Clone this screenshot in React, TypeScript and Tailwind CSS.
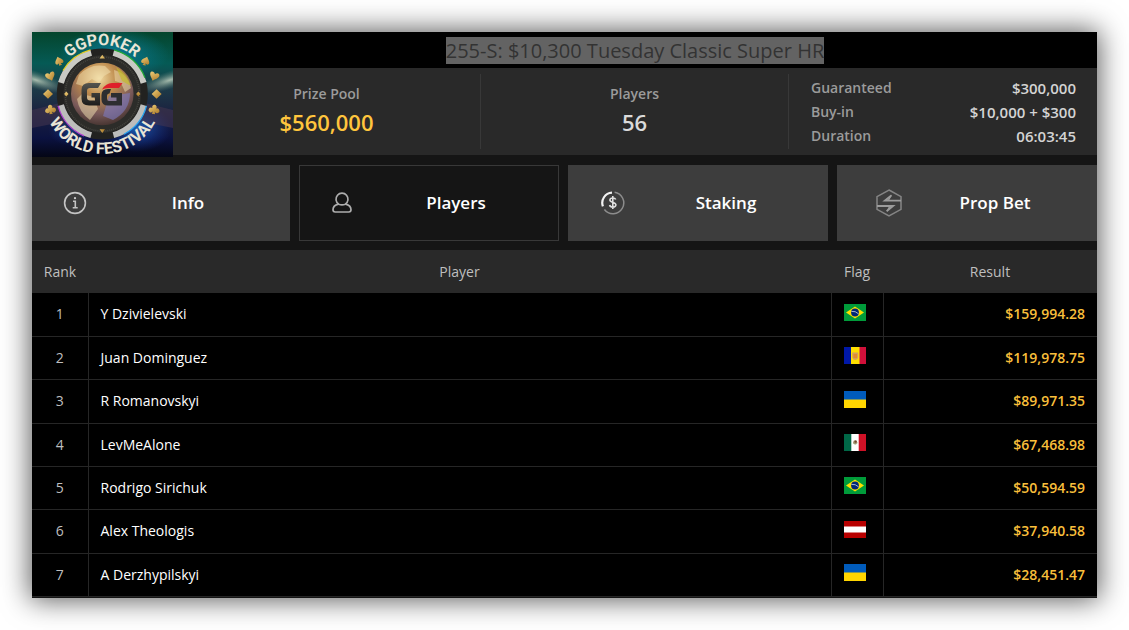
import type { ReactNode } from 'react';
import clsx from 'clsx';

type Country = 'br' | 'ad' | 'ua' | 'mx' | 'at';

interface Result {
  rank: number;
  player: string;
  country: Country;
  prize: string;
}

const results: Result[] = [
  { rank: 1, player: 'Y Dzivielevski', country: 'br', prize: '$159,994.28' },
  { rank: 2, player: 'Juan Dominguez', country: 'ad', prize: '$119,978.75' },
  { rank: 3, player: 'R Romanovskyi', country: 'ua', prize: '$89,971.35' },
  { rank: 4, player: 'LevMeAlone', country: 'mx', prize: '$67,468.98' },
  { rank: 5, player: 'Rodrigo Sirichuk', country: 'br', prize: '$50,594.59' },
  { rank: 6, player: 'Alex Theologis', country: 'at', prize: '$37,940.58' },
  { rank: 7, player: 'A Derzhypilskyi', country: 'ua', prize: '$28,451.47' },
];

const details = [
  { label: 'Guaranteed', value: '$300,000' },
  { label: 'Buy-in', value: '$10,000 + $300' },
  { label: 'Duration', value: '06:03:45' },
];

const countryNames: Record<Country, string> = {
  br: 'Brazil',
  ad: 'Andorra',
  ua: 'Ukraine',
  mx: 'Mexico',
  at: 'Austria',
};

const flagArt: Record<Country, ReactNode> = {
  br: (
    <>
      <rect width="22" height="17" fill="#009b3a" />
      <path d="M11 2.5 20 8.5 11 14.5 2 8.5z" fill="#fedf00" />
      <circle cx="11" cy="8.5" r="3.9" fill="#002776" />
      <path d="M7.4 7.4Q11.4 6.8 14.5 9.8" fill="none" stroke="#cfd8e8" strokeWidth="0.8" />
    </>
  ),
  ad: (
    <>
      <rect width="7" height="17" fill="#0018a8" />
      <rect x="7" width="9" height="17" fill="#fedf00" />
      <rect x="15.5" width="6.5" height="17" fill="#d0103a" />
      <path d="M8.2 5.5h6v5q-.5 2-3 2.5-2.500-.5-3-2.500z" fill="#d3a05a" />
      <rect x="9.5" y="7" width="3.5" height="4" fill="#e58a2c" />
    </>
  ),
  ua: (
    <>
      <rect width="22" height="17" fill="#ffd500" />
      <rect width="22" height="8.5" fill="#005bbb" />
    </>
  ),
  mx: (
    <>
      <rect width="22" height="17" fill="#fff" />
      <rect width="7.3" height="17" fill="#006847" />
      <rect x="14.7" width="7.3" height="17" fill="#ce1126" />
      <circle cx="11.2" cy="8.2" r="2" fill="#a08a6a" />
      <circle cx="11.6" cy="7.6" r="1.1" fill="#6e4a2c" />
      <path d="M9 9.2q2.200 2.400 4.400 0" fill="none" stroke="#9fb88a" strokeWidth="0.7" />
    </>
  ),
  at: (
    <>
      <rect width="22" height="17" fill="#fff" />
      <rect width="22" height="5.5" fill="#b80000" />
      <rect y="11.5" width="22" height="5.5" fill="#b80000" />
    </>
  ),
};

function Flag({ country }: { country: Country }) {
  return (
    <svg viewBox="0 0 22 17" className="block h-[17px] w-[22px]" role="img" aria-label={countryNames[country]}>
      {flagArt[country]}
    </svg>
  );
}

function InfoIcon() {
  return (
    <svg viewBox="0 0 24 24" className="size-6 shrink-0" fill="none" stroke="#c4c4c4" strokeWidth="1.6" aria-hidden="true">
      <circle cx="12" cy="12" r="10.4" />
      <path d="M10 10.3h2.300V16.600M9.700 16.800h5" />
      <circle cx="12" cy="7.2" r="1.1" fill="#d0d0d0" stroke="none" />
    </svg>
  );
}

function PlayerIcon() {
  return (
    <svg viewBox="0 0 24 24" className="size-6 shrink-0" fill="none" stroke="#adadad" strokeWidth="1.7" aria-hidden="true">
      <path d="M8.700 13.200A6 6 0 1 1 15.300 13.200Q12 14.600 8.700 13.200z" />
      <path d="M8.300 13.100C5 13.900 3 16 3 18.800Q3 21 5.200 21H18.800Q21 21 21 18.800C21 16 19 13.900 15.700 13.100" />
    </svg>
  );
}

function StakingIcon() {
  return (
    <svg viewBox="0 0 24 24" className="size-6 shrink-0" fill="none" aria-hidden="true">
      <path d="M13.600 1.200A10.800 10.800 0 1 1 3.400 18.500" stroke="#8c8c8c" strokeWidth="1.5" />
      <path d="M1.900 15.400A10.200 10.200 0 0 1 11 1.700" stroke="#f2f2f2" strokeWidth="2.2" />
      <path
        d="M14.700 8.600C14.300 7.400 13 7 11.800 7 10 7 8.900 7.900 8.900 9.100c0 3.100 6 1.500 6 4.700 0 1.400-1.300 2.300-3.100 2.300-1.600 0-2.900-.7-3.200-2.100M11.800 5v13"
        stroke="#dedede"
        strokeWidth="1.6"
      />
    </svg>
  );
}

function PropBetIcon() {
  return (
    <svg viewBox="0 0 26 28" className="h-7 w-[26px] shrink-0" fill="none" stroke="#9c9c9c" strokeWidth="1.5" aria-hidden="true">
      <path d="M13 1 25 7.600V20.400L13 27 1 20.400V7.600z" stroke="#858585" />
      <path d="M25 11.600H9L15.600 6.300M1 17H17L10.600 22.200" strokeWidth="1.9" />
      <path d="M14.500 7.500 12.500 11M11.800 21 14 17" />
    </svg>
  );
}

const tabs = [
  { name: 'Info', icon: <InfoIcon />, padding: 'pl-[30px]' },
  { name: 'Players', icon: <PlayerIcon />, padding: 'pl-[30px]' },
  { name: 'Staking', icon: <StakingIcon />, padding: 'pl-8' },
  { name: 'Prop Bet', icon: <PropBetIcon />, padding: 'pl-[38px] pr-2' },
];

const suitPaths = {
  spade: 'M0-4.500C1.500-2.500 4.200-1 4.200 1.200 4.200 3 2 3.400.8 2.200L1.600 4.500H-1.600L-.8 2.200C-2 3.400-4.200 3-4.200 1.200-4.200-1-1.500-2.500 0-4.500z',
  heart: 'M0 4.500C-2 2-4.800.2-4.800-2-4.800-4.600-1.400-5 0-2.500 1.400-5 4.800-4.600 4.800-2 4.800.2 2 2 0 4.500z',
  diamond: 'M0-4.800 5 0 0 4.800-5 0z',
  club: 'M0-4.700A2.300 2.300 0 0 1 1.900-1.200 2.400 2.400 0 1 1 .9 2L1.700 4.500H-1.700L-.9 2A2.400 2.400 0 1 1-1.900-1.200 2.300 2.300 0 0 1 0-4.700z',
};

const suits = [
  { d: suitPaths.spade, x: 27, y: 29, turn: -20 },
  { d: suitPaths.heart, x: 18.5, y: 44.5, turn: -20 },
  { d: suitPaths.diamond, x: 16, y: 62, turn: 0 },
  { d: suitPaths.club, x: 18.5, y: 77.5, turn: -8 },
];

function FestivalLogo() {
  return (
    <svg
      viewBox="0 0 141 125"
      className="h-[125px] w-[141px] shrink-0 overflow-visible"
      role="img"
      aria-label="GGPoker World Festival"
    >
      <defs>
        <linearGradient id="arena" x1="0" y1="0" x2="0" y2="1">
          <stop offset="0" stopColor="#04452c" />
          <stop offset="0.25" stopColor="#055a55" />
          <stop offset="0.45" stopColor="#1d3b48" />
          <stop offset="0.65" stopColor="#1b2140" />
          <stop offset="0.85" stopColor="#0b1240" />
          <stop offset="1" stopColor="#040615" />
        </linearGradient>
        <radialGradient id="topGlow">
          <stop offset="0" stopColor="#0a7a9a" stopOpacity="0.9" />
          <stop offset="1" stopColor="#0a86a5" stopOpacity="0" />
        </radialGradient>
        <radialGradient id="lowGlow">
          <stop offset="0" stopColor="#1c6fd0" stopOpacity="0.8" />
          <stop offset="1" stopColor="#1c3fb0" stopOpacity="0" />
        </radialGradient>
        <radialGradient id="lamp">
          <stop offset="0" stopColor="#e8f0d8" stopOpacity="0.7" />
          <stop offset="1" stopColor="#6c8f80" stopOpacity="0" />
        </radialGradient>
        <radialGradient id="globe" cx="0.45" cy="0.25" r="0.8">
          <stop offset="0" stopColor="#f0d9a0" />
          <stop offset="0.35" stopColor="#bd8a4c" />
          <stop offset="0.7" stopColor="#7a5a5a" />
          <stop offset="1" stopColor="#3c2c28" />
        </radialGradient>
        <linearGradient id="chrome" x1="0" y1="0" x2="0" y2="1">
          <stop offset="0" stopColor="#55554f" />
          <stop offset="1" stopColor="#1c1c1c" />
        </linearGradient>
        <linearGradient id="gold" x1="0" y1="0" x2="1" y2="1">
          <stop offset="0" stopColor="#f0d07a" />
          <stop offset="1" stopColor="#a87524" />
        </linearGradient>
        <clipPath id="frame">
          <rect width="141" height="125" />
        </clipPath>
        <path id="topArc" d="M21.300 62A49 49 0 0 1 119.300 62" />
        <path id="bottomArc" d="M10.300 62A60 60 0 0 0 130.300 62" />
      </defs>

      {/* Arena backdrop */}
      <g clipPath="url(#frame)">
        <rect width="141" height="125" fill="url(#arena)" />
        <ellipse cx="82" cy="22" rx="55" ry="26" fill="url(#topGlow)" />
        <ellipse cx="104" cy="96" rx="36" ry="24" fill="url(#lowGlow)" />
        <ellipse cx="40" cy="98" rx="24" ry="16" fill="url(#lowGlow)" opacity="0.5" />
        <ellipse cx="4" cy="48" rx="34" ry="9" fill="url(#lamp)" transform="rotate(18 4 48)" />
        <ellipse cx="138" cy="48" rx="34" ry="9" fill="url(#lamp)" transform="rotate(-18 138 48)" />
        <path d="M0 78 40 68V88L0 96zM141 78 101 68V88L141 96z" fill="#4a3850" opacity="0.5" />
      </g>

      {/* Chip */}
      <circle cx="70.3" cy="62" r="41" fill="none" stroke="#222220" strokeWidth="9" />
      <g fill="none" strokeWidth="6">
        <path d="M29 50.900A42.700 42.700 0 0 1 59.200 20.800" stroke="#c9cac4" />
        <path d="M81.400 20.800A42.700 42.700 0 0 1 111.600 50.900" stroke="#c9cac4" />
        <path d="M111.600 73.100A42.700 42.700 0 0 1 81.400 103.200" stroke="#bcbdbb" />
        <path d="M59.200 103.200A42.700 42.700 0 0 1 29 73.100" stroke="#bcbdbb" />
      </g>
      <g fill="none" strokeWidth="1.3">
        <path d="M31 38.500A45.700 45.700 0 0 1 58.500 17.900" stroke="#e4cf24" />
        <path d="M82.100 17.900A45.700 45.700 0 0 1 113 45.700" stroke="#22a836" />
        <path d="M114.500 73.800A45.700 45.700 0 0 1 92 102.200" stroke="#28a4ef" />
        <path d="M52 103.900A45.700 45.700 0 0 1 26.100 73.800" stroke="#b13fd0" />
      </g>
      <circle cx="70.3" cy="62" r="39" fill="#2c2c29" />
      <circle cx="70.3" cy="62" r="37" fill="none" stroke="#45453f" strokeWidth="1.5" strokeDasharray="1 1" />
      <circle cx="70.3" cy="62" r="31.3" fill="url(#globe)" />
      <path
        d="M47 43Q58 31 73 34L79 40 72 44 67 51 60 47 51 54 44 52zM82 38Q95 41 99 56L93 60 89 51 83 49zM50 62 62 65 66 77 58 88Q47 80 45 67z"
        fill="#f3e3b4"
        opacity="0.5"
      />
      <path d="M77 64 98 61Q98 79 81 88L71 84z" fill="#7c78b8" opacity="0.65" />
      <path d="M84 35Q96 42 99 54L90 49z" fill="#c3bb2d" opacity="0.7" />
      <g fill="url(#gold)">
        <path d="M70.300 22.800 73 26.500H67.600zM70.300 101 73 97.300H67.600z" />
        <path d="M34.300 59.500 36.500 62 34.300 64.500 32.100 62zM106.300 59.500 108.500 62 106.300 64.500 104.100 62z" />
      </g>

      {/* GG monogram */}
      <path
        d="M69 51H57Q49.500 51 49.500 58V66.500Q49.500 73.500 57 73.500H68V61H59.500V65.500H63V68.500H58Q55 68.500 55 65.500V59Q55 56 58 56H66z"
        fill="url(#chrome)"
      />
      <path
        d="M79 57H76Q69.500 57 69.500 63V67.500Q69.500 73.500 76 73.500H90V61H79V65.500H84.500V69H77Q75 69 75 66.500V64Q75 61.500 77.500 61.500z"
        fill="#2d2d30"
      />
      <path d="M70 57.500Q74 51 80 51H90.500L87 56H77Q72.500 56 70 57.500z" fill="#df1f2a" />

      {/* Card suits down both sides */}
      <g fill="url(#gold)">
        {suits.map((suit) => (
          <g key={suit.y}>
            <path d={suit.d} transform={`translate(${suit.x} ${suit.y}) rotate(${suit.turn})`} />
            <path d={suit.d} transform={`translate(${140.6 - suit.x} ${suit.y}) rotate(${-suit.turn})`} />
          </g>
        ))}
      </g>

      <g fill="#e9e5d6" fontFamily="Roboto, sans-serif" fontWeight="700" textAnchor="middle" fontSize="16">
        <text>
          <textPath href="#topArc" startOffset="50%">
            GGPOKER
          </textPath>
        </text>
        <text>
          <textPath href="#bottomArc" startOffset="50%">
            WORLD FESTIVAL
          </textPath>
        </text>
      </g>
    </svg>
  );
}

function Header() {
  return (
    <header className="flex">
      <FestivalLogo />
      <div className="min-w-0 flex-1">
        <h1 className="flex h-9 items-center justify-center bg-black text-xl leading-[27px] font-medium text-[#333333]">
          <span className="bg-[#636363]">255-S: $10,300 Tuesday Classic Super HR</span>
        </h1>
        <div className="grid h-[87px] grid-cols-3 bg-[#292929] py-1.5 text-sm font-semibold text-[#9b9b9b]">
          <div className="border-r border-[#383838] pt-2 text-center">
            <p className="leading-6">Prize Pool</p>
            <p className="text-[22px] leading-8 text-[#ffc53d]">$560,000</p>
          </div>
          <div className="border-r border-[#383838] pt-2 text-center">
            <p className="leading-6">Players</p>
            <p className="text-[22px] leading-8 text-[#dadada]">56</p>
          </div>
          <dl className="flex flex-col justify-center pr-[21px] pl-[22px]">
            {details.map((item) => (
              <div key={item.label} className="flex justify-between leading-6">
                <dt>{item.label}</dt>
                <dd className="text-[15px] text-[#d4d4d4]">{item.value}</dd>
              </div>
            ))}
          </dl>
        </div>
      </div>
    </header>
  );
}

function Tabs({ active }: { active: string }) {
  return (
    <nav className="mt-2 mb-[9px] grid grid-cols-[258fr_260fr_260fr_260fr] gap-[9px]">
      {tabs.map((tab) => (
        <button
          key={tab.name}
          type="button"
          aria-pressed={tab.name === active}
          className={clsx(
            'flex h-[76px] items-center border text-[17px] font-semibold text-white',
            tab.padding,
            tab.name === active ? 'border-[#383838] bg-[#151515]' : 'border-[#3d3d3d] bg-[#3d3d3d]'
          )}
        >
          {tab.icon}
          <span className="flex-1 text-center">{tab.name}</span>
        </button>
      ))}
    </nav>
  );
}

function ResultsTable() {
  return (
    <table className="w-full table-fixed border-collapse bg-black text-sm">
      <colgroup>
        <col className="w-14" />
        <col />
        <col className="w-[52px]" />
        <col className="w-[214px]" />
      </colgroup>
      <thead>
        <tr className="h-[43px] bg-[#292929] text-[#bfbfbf]">
          <th className="font-normal">Rank</th>
          <th className="font-normal">Player</th>
          <th className="font-normal">Flag</th>
          <th className="font-normal">Result</th>
        </tr>
      </thead>
      <tbody>
        {results.map((row) => (
          <tr key={row.rank} className="h-[43px] border-b border-[#262626] nth-[3n]:h-11">
            <td className="border-r border-[#262626] text-center text-[#bfbfbf]">{row.rank}</td>
            <td className="border-r border-[#262626] pl-3 font-medium text-white">{row.player}</td>
            <td className="border-r border-[#262626] pb-1 pl-3">
              <Flag country={row.country} />
            </td>
            <td className="pr-3 text-right font-semibold text-[#f9bf3b]">{row.prize}</td>
          </tr>
        ))}
      </tbody>
    </table>
  );
}

export default function App() {
  return (
    <div className="bg-white p-8 font-['Open_Sans',sans-serif]">
      <main className="bg-[#151515] pb-px shadow-[0_0_26px_2px_rgba(0,0,0,0.65)]">
        <Header />
        <Tabs active="Players" />
        <ResultsTable />
      </main>
    </div>
  );
}
